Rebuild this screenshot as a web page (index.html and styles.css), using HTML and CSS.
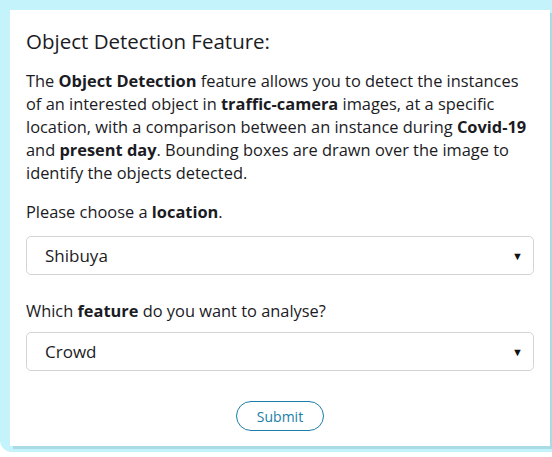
FILE: index.html
```html
<!DOCTYPE html>
<html>
<head>
<meta charset="utf-8">
<link rel="stylesheet" href="styles.css">
</head>
<body>
<div class="bg">
  <div class="card">
    <h2 class="title">Object Detection Feature:</h2>
    <p class="desc">The <b>Object Detection</b> feature allows you to detect the instances<br>of an interested object in <b>traffic-camera</b> images, at a specific<br>location, with a comparison between an instance during <b>Covid-19</b><br>and <b>present day</b>. Bounding boxes are drawn over the image to<br>identify the objects detected.</p>
    <p class="label">Please choose a <b>location</b>.</p>
    <div class="select"><span>Shibuya</span><span class="arrow">▼</span></div>
    <p class="label">Which <b>feature</b> do you want to analyse?</p>
    <div class="select"><span>Crowd</span><span class="arrow">▼</span></div>
    <div class="actions"><button class="submit">Submit</button></div>
  </div>
</div>
</body>
</html>
```
FILE: styles.css
```css
html, body { margin: 0; padding: 0; background: #fff; overflow: hidden; }
body { font-family: "Open Sans", "Noto Sans", sans-serif; color: #1b1b24; }
.bg {
  background: #c4f3fb;
  width: 552px;
  height: 452px;
  box-sizing: border-box;
  padding: 10px 0 0 10px;
  border-radius: 0 0 0 12px;
}
.card {
  background: #fff;
  width: 540px;
  height: 436px;
  box-sizing: border-box;
  padding: 17px 16px 0 16px;
  box-shadow: 3px 3px 0 #a9dbe4;
}
.title { margin: 0 0 14px; font-size: 20.5px; font-weight: 400; line-height: 28px; }
.desc { margin: 0 0 16px; font-size: 16.4px; line-height: 23px; white-space: nowrap; }
.label { margin: 0 0 13px; font-size: 16.4px; line-height: 23px; }
.select + .label { margin-top: 24px; margin-bottom: 10px; }
b { font-weight: 700; }
.select {
  display: flex; align-items: center; justify-content: space-between;
  height: 39px; box-sizing: border-box;
  border: 1px solid #d4d4d4; border-radius: 5px;
  padding: 0 10px 0 18px;
  font-size: 17px;
}
.arrow { font-size: 11px; color: #111; }
.actions { display: flex; justify-content: center; padding-top: 30px; }
.submit {
  font-family: inherit; font-size: 14px; color: #1a7ea6;
  background: #fff; border: 1px solid #1a7ea6; border-radius: 15px;
  width: 88px; height: 30px; padding: 0;
}
```
